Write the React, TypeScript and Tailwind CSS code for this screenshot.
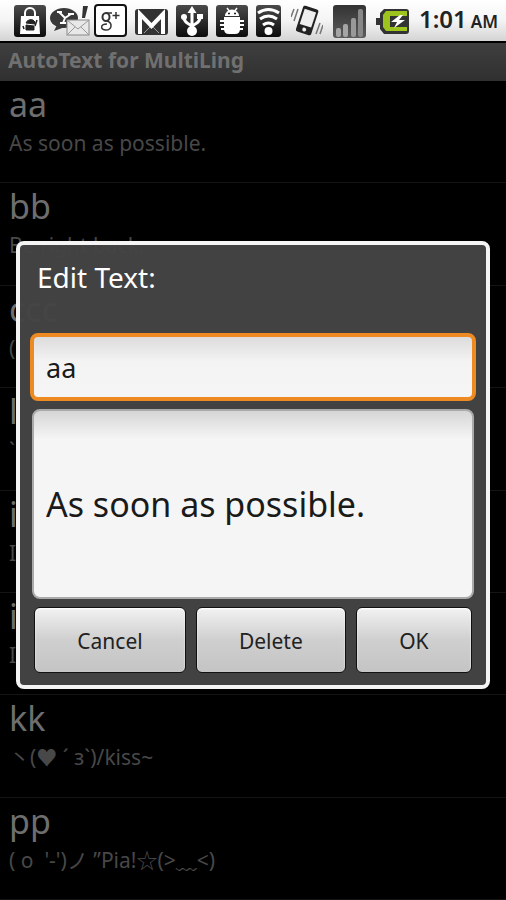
import type { ReactNode } from 'react'

type Entry = { id: number; key: string; text: string }

const entries: Entry[] = [
  { id: 1, key: 'aa', text: 'As soon as possible.' },
  { id: 2, key: 'bb', text: 'Be right back.' },
  { id: 3, key: 'ccc', text: '(' },
  { id: 4, key: 'l', text: '`' },
  { id: 5, key: 'i', text: 'I' },
  { id: 6, key: 'i', text: 'I' },
  { id: 7, key: 'kk', text: '丶(♥ ´ з`)/kiss~' },
  { id: 8, key: 'pp', text: "( o  '-')ノ ”Pia!☆(>﹏<)" },
]

function Tile({ label, children, wide = 32 }: { label: string; children: ReactNode; wide?: number }) {
  return (
    <svg width={wide} height="34" viewBox={`0 0 ${wide} 34`} role="img" aria-label={label} className="shrink-0">
      <defs>
        <linearGradient id="tile" x1="0" y1="0" x2="0" y2="1">
          <stop offset="0" stopColor="#4a4a4a" />
          <stop offset="1" stopColor="#0c0c0c" />
        </linearGradient>
        <linearGradient id="bars" x1="0" y1="0" x2="0" y2="1">
          <stop offset="0" stopColor="#333" />
          <stop offset="1" stopColor="#5c5c5c" />
        </linearGradient>
      </defs>
      {children}
    </svg>
  )
}

function StatusBar() {
  return (
    <header className="flex h-[43px] items-center border-b-2 border-black bg-linear-to-b from-white via-[#f4f4f4] to-[#d4d4d4] pr-2 pl-[14px]">
      <div className="flex items-center gap-2">
        <div className="flex items-center gap-1">
          <Tile label="Market">
            <rect y="1" width="32" height="32" rx="3" fill="url(#tile)" />
            <path d="M11 13V9a5 5 0 0 1 10 0v4" fill="none" stroke="#fff" strokeWidth="2" />
            <path d="M7 12h18l1 18H6z" fill="#fff" />
            <path d="M12 19a5 5 0 0 1 9-1v2zM12 21l8 1v4h-8z" fill="#222" stroke="#222" />
            <path d="M9 22l1 3M23 16l-2 6" stroke="#222" strokeWidth="1.5" />
          </Tile>
          <Tile label="Yahoo Mail" wide={40}>
            <ellipse cx="14" cy="14" rx="14" ry="10" fill="#3a3a3a" />
            <path d="M7 21l-3 6 11-4z" fill="#3a3a3a" />
            <path d="M9 8l6 6 6-4M15 14l-2 5M7 8h5M18 10h6M10 19h6" fill="none" stroke="#fff" strokeWidth="2" />
            <path d="M33 2h5l-3 12h-3z" fill="#333" />
            <rect x="17" y="16" width="22" height="15" fill="#e8e8e8" stroke="#888" />
            <path d="M17 16l11 9 11-9M17 31l8-8M39 31l-8-8" fill="none" stroke="#999" />
          </Tile>
          <Tile label="Google Plus" wide={33}>
            <rect x="1" y="1" width="31" height="31" rx="3" fill="#fff" stroke="#111" strokeWidth="2" />
            <ellipse cx="12" cy="13" rx="3.500" ry="4" fill="none" stroke="#333" strokeWidth="2" />
            <path d="M12 9h6M13 17c6 2 5 9-1 9s-6-6 1-6" fill="none" stroke="#333" strokeWidth="1.5" />
            <path d="M22 8v7M18.500 11.500h7" stroke="#333" strokeWidth="1.5" />
          </Tile>
        </div>
        <Tile label="Gmail" wide={33}>
          <rect y="5" width="33" height="26" rx="3" fill="#333" />
          <path d="M5 30V10l11.500 12L28 10v20" fill="none" stroke="#fff" strokeWidth="4" />
          <path d="M9 29l6-6M24 29l-6-6" stroke="#999" />
        </Tile>
        <Tile label="USB connected">
          <rect y="1" width="32" height="32" rx="3" fill="url(#tile)" />
          <path d="M16 27V6M16 24c0-5-8-3-8-11M16 24c0-5 8-3 8-11" fill="none" stroke="#fff" strokeWidth="3" />
          <path d="M11.500 9L16 2l4.500 7zM21 10h6v5h-6z" fill="#fff" />
          <circle cx="8" cy="13" r="3" fill="#fff" />
          <circle cx="16" cy="27" r="5" fill="#fff" />
        </Tile>
        <Tile label="USB debugging">
          <rect y="1" width="32" height="32" rx="3" fill="url(#tile)" />
          <path d="M11 4l3 4M21 4l-3 4" stroke="#fff" strokeWidth="1.5" />
          <path d="M9 12a7 6.500 0 0 1 14 0z" fill="#fff" />
          <path d="M8 13h16v12q0 5-5 5h-6q-5 0-5-5z" fill="#fff" />
          <path d="M4 17h24M4 21h24M5 25h22" stroke="#fff" strokeWidth="2" />
          <path d="M12 9.500h2M18 9.500h2" stroke="#222" strokeWidth="1.5" />
        </Tile>
      </div>
      <div className="ml-auto flex items-center gap-[10px]">
        <Tile label="Wi-Fi" wide={25}>
          <rect y="1" width="25" height="32" rx="3" fill="url(#tile)" />
          <path d="M2 9q10.500-7 21 0M4 15q8.500-6 17 0M7 21q5.500-4 11 0" fill="none" stroke="#fff" strokeWidth="3" />
          <circle cx="12.500" cy="27" r="4" fill="#fff" />
        </Tile>
        <Tile label="Vibrate">
          <g transform="rotate(18 16 17)">
            <rect x="8" y="3" width="16" height="27" rx="2" fill="#222" />
            <rect x="10" y="6" width="12" height="16" fill="#eee" />
            <circle cx="16" cy="26" r="2" fill="#eee" />
          </g>
          <path d="M3 5L0 13M7 5L3 17M29 19l-4 11M32 21l-3 9" stroke="#777" strokeWidth="1.500" />
        </Tile>
        <Tile label="Signal strength" wide={33}>
          <rect y="1" width="33" height="33" rx="3" fill="url(#bars)" />
          <rect x="3" y="24" width="5" height="9" rx="2" fill="#a5a5a5" />
          <rect x="10" y="20" width="5" height="13" rx="2" fill="#a5a5a5" />
          <rect x="18" y="14" width="5" height="19" rx="2" fill="#999" />
          <rect x="25" y="5" width="5" height="28" rx="2" fill="#888" />
        </Tile>
        <Tile label="Battery charging" wide={33}>
          <path d="M8 5h22a3 3 0 0 1 3 3v19a3 3 0 0 1-3 3H8l-4-5v-4H0v-7h4V9z" fill="#333" />
          <path d="M10 7h21v5H14v11h17v4H10l-3-4V11z" fill="#9dc41c" />
          <path d="M24 11l-9 7h6l-3 6 11-8h-6l4-5z" fill="#fff" />
        </Tile>
        <p className="flex items-baseline gap-1 text-[24px] leading-8 font-semibold whitespace-nowrap text-[#222]">
          <span>1:01</span>
          <span className="text-[17px]">AM</span>
        </p>
      </div>
    </header>
  )
}

function DialogButton({ children, className }: { children: ReactNode; className: string }) {
  return (
    <button
      type="button"
      className={`${className} h-[66px] rounded-md border border-[#111] bg-linear-to-b from-[#f2f2f2] via-[#cfcfcf] via-50% to-[#c4c4c4] pt-1 text-[21px] text-[#222] shadow-[inset_0_1px_2px_#fff]`}
    >
      {children}
    </button>
  )
}

export default function App() {
  return (
    <div className="relative flex min-h-screen flex-col bg-black font-['Noto_Sans','Noto_Sans_CJK_JP',sans-serif]">
      <StatusBar />
      <h1 className="bg-linear-to-b from-[#3f3f3f] to-[#303030] px-2 pb-1 text-[21px] leading-[34px] font-bold text-[#707070]">
        AutoText for MultiLing
      </h1>
      <ul className="flex flex-1 flex-col">
        {entries.map((entry) => (
          <li key={entry.id} className="flex-1 border-b border-[#141414] px-[9px] whitespace-nowrap">
            <p className="text-[34px] leading-[47px] text-[#6e6e6e]">{entry.key}</p>
            <p className="text-[21px] leading-[30px] whitespace-pre text-[#484848]">{entry.text}</p>
          </li>
        ))}
      </ul>

      <div className="absolute inset-0 flex items-center px-4 pt-[30px]">
        <form
          role="dialog"
          aria-labelledby="dialog-title"
          className="w-full rounded-lg border-4 border-[#f4f4f4] bg-[#444444]/97 px-[10px] pb-3"
        >
          <h2 id="dialog-title" className="px-[7px] pt-2 pb-8 text-[28px] leading-[48px] text-white">
            Edit Text:
          </h2>
          <input
            aria-label="Shortcut"
            defaultValue="aa"
            className="block h-[68px] w-full rounded-lg border-4 border-[#ee8a22] bg-linear-to-b from-[#dcdcdc] via-[#f3f3f3] via-40% to-[#f5f5f5] px-3 text-[27px] text-[#1a1a1a] outline-none"
          />
          <div className="px-[2px]">
            <input
              aria-label="Expanded text"
              defaultValue="As soon as possible."
              className="mt-2 block h-[190px] w-full rounded-lg border-2 border-[#aaa] bg-linear-to-b from-[#d6d6d6] via-[#f5f5f5] via-15% to-[#f5f5f5] px-3 text-[34px] text-[#1a1a1a] outline-none"
            />
          </div>
          <div className="mt-2 flex gap-[10px] px-1">
            <DialogButton className="flex-[151]">Cancel</DialogButton>
            <DialogButton className="flex-[149]">Delete</DialogButton>
            <DialogButton className="flex-[115]">OK</DialogButton>
          </div>
        </form>
      </div>
    </div>
  )
}
